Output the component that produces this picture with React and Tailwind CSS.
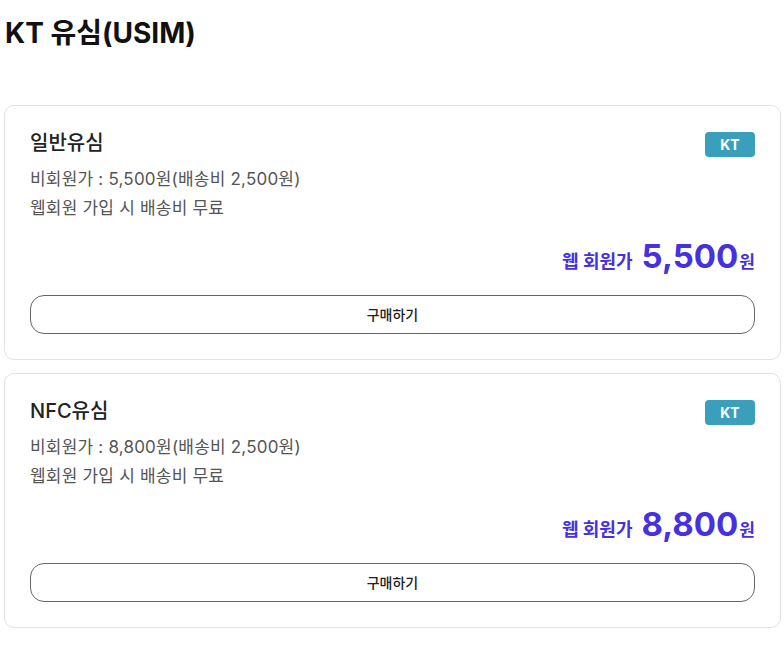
import React from "react";

const font = { fontFamily: 'Inter, "Noto Sans CJK KR", sans-serif' };

function Card({ name, price }) {
  return (
    <div className="border border-[#e2e2e2] rounded-[10px] bg-white px-[25px] pt-[26px] pb-[25px]">
      <div className="flex items-start justify-between h-[25px]">
        <div className="text-[20px] leading-[23px] font-medium text-[#222]">{name}</div>
        <div className="w-[50px] h-[25px] rounded-[4px] bg-[#3a9fba] text-white text-[14px] font-bold flex items-center justify-center">KT</div>
      </div>
      <div className="mt-2 text-[17px] leading-[29px] text-[#555] tracking-[0.2px]">
        <div>비회원가 : {price}원(배송비 2,500원)</div>
        <div>웹회원 가입 시 배송비 무료</div>
      </div>
      <div className="mt-[13px] h-[40px] flex items-baseline justify-end text-[#4630e0] font-bold">
        <span className="text-[18px] mr-[9px]">웹 회원가</span>
        <span className="text-[33px] leading-[40px] font-bold">{price}</span>
        <span className="text-[17px] ml-[1px]">원</span>
      </div>
      <button className="mt-[19px] w-full h-[39px] rounded-[14px] border border-[#666] text-[14px] font-medium text-[#222] flex items-center justify-center">
        구매하기
      </button>
    </div>
  );
}

export default function App() {
  return (
    <div className="bg-white w-[784px] min-h-[649px]" style={font}>
      <h1 className="pl-[5px] pt-[15px] text-[28px] leading-[36px] font-bold text-[#111]">KT 유심(USIM)</h1>
      <div className="ml-[4px] w-[777px] mt-[54px] flex flex-col gap-[13px]">
        <Card name="일반유심" price="5,500" />
        <Card name="NFC유심" price="8,800" />
      </div>
    </div>
  );
}
